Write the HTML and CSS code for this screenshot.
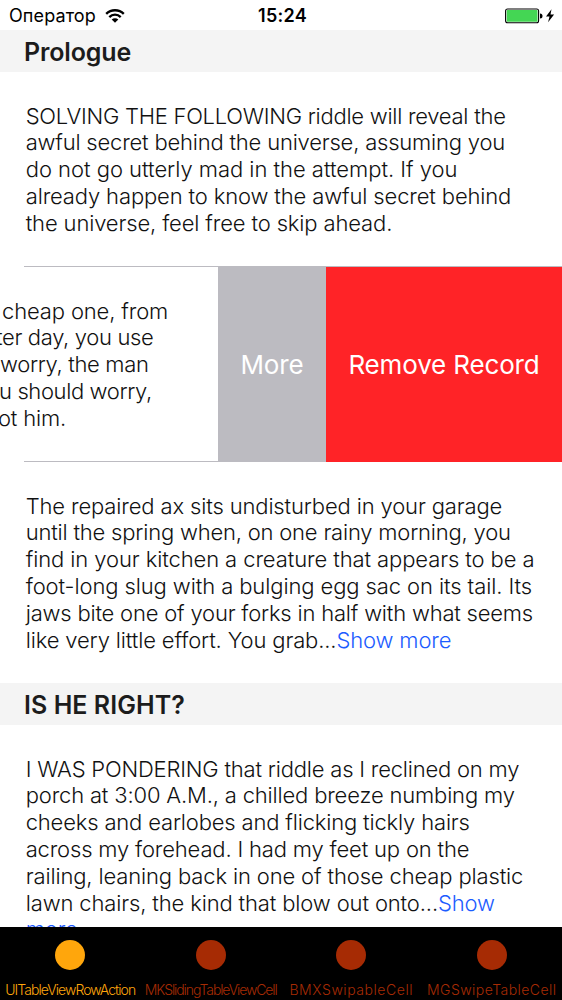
FILE: index.html
```
<!DOCTYPE html>
<html lang="en">
<head>
<meta charset="utf-8">
<title>UITableViewRowAction</title>
<link rel="stylesheet" href="styles.css">
</head>
<body>
<div class="screen">
  <header class="status">
    <div class="carrier"><span>Оператор</span>
      <svg class="wifi" width="20" height="14" viewBox="0 0 20 14"><g fill="none" stroke="#000" stroke-width="2.3"><path d="M1.2 4.900a12.400 12.400 0 0 1 17.600 0"/><path d="M4.300 8.100a8 8 0 0 1 11.400 0"/></g><path d="M6.700 10.600a4.600 4.600 0 0 1 6.600 0l-3.300 3.200z"/></svg>
    </div>
    <div class="time">15:24</div>
    <svg class="battery" width="51" height="16" viewBox="0 0 51 16"><rect x=".6" y="1" width="33" height="13.800" rx="2" fill="none" stroke="#000" stroke-width="1.1"/><rect x="1.700" y="2.100" width="30.800" height="11.600" rx=".8" fill="#44d654"/><path d="M35 5.500a2.500 2.500 0 0 1 0 5z"/><path d="M46.500 1.200l-5.500 7.300h3.500l-1.400 5.800 6-7.700h-3.600z"/></svg>
  </header>
  <main class="table">
    <h2 class="header"><span class="h1">Prologue</span></h2>
    <div class="cell short">
      <p class="tighter">SOLVING THE FOLLOWING riddle will reveal the</p>
      <p class="tight">awful secret behind the universe, assuming you</p>
      <p class="loose">do not go utterly mad in the attempt. If you</p>
      <p>already happen to know the awful secret behind</p>
      <p>the universe, feel free to skip ahead.</p>
    </div>
    <div class="swipe">
      <div class="slid"><p class="s1">cheap one, from</p><p class="s2">ter day, you use</p><p class="s3">worry, the man</p><p class="s4">u should worry,</p><p class="s5">ot him.</p></div>
      <div class="more">More</div>
      <div class="remove">Remove Record</div>
    </div>
    <div class="cell tall">
      <p>The repaired ax sits undisturbed in your garage</p>
      <p class="tight">until the spring when, on one rainy morning, you</p>
      <p class="natural">find in your kitchen a creature that appears to be a</p>
      <p class="natural">foot-long slug with a bulging egg sac on its tail. Its</p>
      <p class="tight">jaws bite one of your forks in half with what seems</p>
      <p>like very little effort. You grab...<a>Show more</a></p>
    </div>
    <h2 class="header"><span class="h2">IS HE RIGHT?</span></h2>
    <div class="cell">
      <p class="tight">I WAS PONDERING that riddle as I reclined on my</p>
      <p class="snug">porch at 3:00 A.M., a chilled breeze numbing my</p>
      <p class="snug">cheeks and earlobes and flicking tickly hairs</p>
      <p class="snug">across my forehead. I had my feet up on the</p>
      <p>railing, leaning back in one of those cheap plastic</p>
      <p>lawn chairs, the kind that blow out onto...<a>Show</a></p>
      <p><a>more</a></p>
    </div>
  </main>
  <nav class="tabs">
    <div class="tab active"><i></i><span class="t1">UITableViewRowAction</span></div>
    <div class="tab"><i></i><span class="t2">MKSlidingTableViewCell</span></div>
    <div class="tab"><i></i><span class="t3">BMXSwipableCell</span></div>
    <div class="tab"><i></i><span class="t4">MGSwipeTableCell</span></div>
  </nav>
</div>
</body>
</html>
```
FILE: styles.css
```
body{margin:0;background:#fff;color:#111;font-family:Inter,"Noto Sans",sans-serif}
.screen{width:562px;height:1000px;display:flex;flex-direction:column;overflow:hidden}
.status{height:30px;flex:none;display:grid;grid-template-columns:1fr auto 1fr;align-items:center;padding:1px 6px 0 9px;box-sizing:border-box;font-size:18px;line-height:29px;color:#000}
.carrier{display:flex;align-items:center;gap:9px;letter-spacing:.1px}
.time{font-weight:600;letter-spacing:.25px}
.battery{justify-self:end}
.table{flex:1;min-height:0;overflow:hidden}
.header{height:42px;margin:0;padding:2px 24px 0;box-sizing:border-box;background:#f4f4f4;font-size:25px;line-height:41px;font-weight:600;color:#1c1c1c}
.h1{letter-spacing:-.15px}
.h2{letter-spacing:.05px}
p{margin:0;white-space:nowrap}
.cell,.slid{box-sizing:border-box;padding:30.500px 25.700px 0;font-size:22px;line-height:26.830px;font-weight:330;letter-spacing:-.14px}
.natural{letter-spacing:-.1px}
.snug{letter-spacing:-.17px}
.tight{letter-spacing:-.2px}
.tighter{letter-spacing:-.26px}
.loose{letter-spacing:-.03px}
.short{height:194px}
.tall{height:221px}
a{color:#1c5cff}
.swipe{height:196px;box-sizing:border-box;display:flex;color:#fff;font-size:26px;line-height:197px;letter-spacing:-.15px;text-align:center;background:linear-gradient(#bcbbc1,#bcbbc1) 24px 0/538px 1px no-repeat,linear-gradient(#bcbbc1,#bcbbc1) 24px 195px/194px 1px no-repeat}
.slid{width:218px;flex:none;color:#111;text-align:left;padding-left:0;overflow:hidden;padding-top:31.500px}
.s1{margin-left:2px}
.s2{margin-left:-4px;letter-spacing:-.34px}
.s3{margin-left:0;letter-spacing:-.34px}
.s4{margin-left:-1px;letter-spacing:-.38px}
.s5{margin-left:-2px;letter-spacing:-.2px}
.more{width:108px;background:#bcbbc1}
.remove{flex:1;margin-top:1px;line-height:195px;background:#ff2327}
.tabs{height:73px;flex:none;display:grid;grid-template-columns:repeat(4,1fr);background:#000;color:#a62b04;font-size:14px;font-weight:350}
.tab{min-width:0;display:flex;flex-direction:column;align-items:center;padding-top:13px;white-space:nowrap}
.tab i{width:30px;height:30px;border-radius:50%;background:currentColor}
.tab span{margin-top:11px;line-height:18px}
.active{color:#ffa60c}
.t1{letter-spacing:-.95px}
.t2{letter-spacing:-1.100px}
.t3{letter-spacing:.55px}
.t4{letter-spacing:.45px}
```
